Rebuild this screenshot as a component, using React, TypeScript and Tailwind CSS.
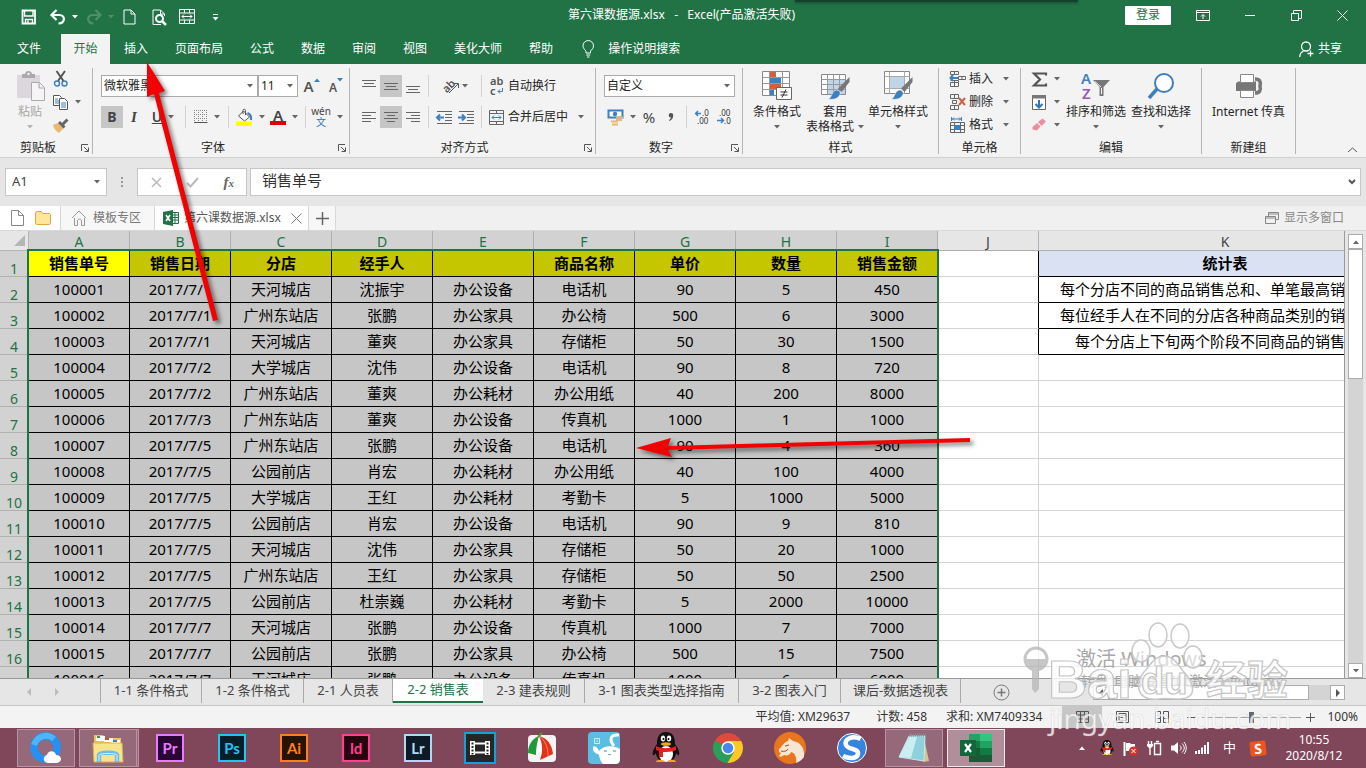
import type { ReactNode } from 'react';
import { clsx } from 'clsx';

const MENU_TABS = ['插入', '页面布局', '公式', '数据', '审阅', '视图', '美化大师', '帮助'];

const COLUMNS = ['A', 'B', 'C', 'D', 'E', 'F', 'G', 'H', 'I'];

const HEADINGS = ['销售单号', '销售日期', '分店', '经手人', '', '商品名称', '单价', '数量', '销售金额'];

const SALES = [
  ['100001', '2017/7/1', '天河城店', '沈振宇', '办公设备', '电话机', '90', '5', '450'],
  ['100002', '2017/7/1', '广州东站店', '张鹏', '办公家具', '办公椅', '500', '6', '3000'],
  ['100003', '2017/7/1', '天河城店', '董爽', '办公家具', '存储柜', '50', '30', '1500'],
  ['100004', '2017/7/2', '大学城店', '沈伟', '办公设备', '电话机', '90', '8', '720'],
  ['100005', '2017/7/2', '广州东站店', '董爽', '办公耗材', '办公用纸', '40', '200', '8000'],
  ['100006', '2017/7/3', '广州东站店', '董爽', '办公设备', '传真机', '1000', '1', '1000'],
  ['100007', '2017/7/5', '广州东站店', '张鹏', '办公设备', '电话机', '90', '4', '360'],
  ['100008', '2017/7/5', '公园前店', '肖宏', '办公耗材', '办公用纸', '40', '100', '4000'],
  ['100009', '2017/7/5', '大学城店', '王红', '办公耗材', '考勤卡', '5', '1000', '5000'],
  ['100010', '2017/7/5', '公园前店', '肖宏', '办公设备', '电话机', '90', '9', '810'],
  ['100011', '2017/7/5', '天河城店', '沈伟', '办公家具', '存储柜', '50', '20', '1000'],
  ['100012', '2017/7/5', '广州东站店', '王红', '办公家具', '存储柜', '50', '50', '2500'],
  ['100013', '2017/7/5', '公园前店', '杜崇巍', '办公耗材', '考勤卡', '5', '2000', '10000'],
  ['100014', '2017/7/7', '天河城店', '张鹏', '办公设备', '传真机', '1000', '7', '7000'],
  ['100015', '2017/7/7', '公园前店', '张鹏', '办公家具', '办公椅', '500', '15', '7500'],
  ['100016', '2017/7/7', '天河城店', '张鹏', '办公设备', '传真机', '1000', '6', '6000'],
];

const NOTES = [
  '每个分店不同的商品销售总和、单笔最高销',
  '每位经手人在不同的分店各种商品类别的销',
  '每个分店上下旬两个阶段不同商品的销售',
];

const SHEETS = [
  { name: '1-1 条件格式', width: 'w-[102px]' },
  { name: '1-2 条件格式', width: 'w-[102px]' },
  { name: '2-1 人员表', width: 'w-[89px]' },
  { name: '2-2 销售表', width: 'w-[90px]', active: true },
  { name: '2-3 建表规则', width: 'w-[102px]' },
  { name: '3-1 图表类型选择指南', width: 'w-[154px]' },
  { name: '3-2 图表入门', width: 'w-[102px]' },
  { name: '课后-数据透视表', width: 'w-[120px]' },
];

type Kids = { children?: ReactNode };

function Icon({ w, h, children }: Kids & { w: number; h: number }) {
  return (
    <svg width={w} height={h} viewBox={`0 0 ${w} ${h}`} fill="none" stroke="#555" className="shrink-0 overflow-visible" aria-hidden="true">
      {children}
    </svg>
  );
}

function Caret({ color = '#666' }: { color?: string }) {
  return (
    <svg width="6" height="4" viewBox="0 0 6 4" className="shrink-0" aria-hidden="true">
      <path d="M0 0h6L3 3.500z" fill={color} />
    </svg>
  );
}

/* ---------- title bar ---------- */

function TitleBar() {
  return (
    <header className="relative flex h-[34px] shrink-0 items-center text-white">
      <div className="absolute left-[795px] top-0 h-[2px] w-[283px] bg-[#12432a] shadow-[0_1px_3px_#12432a]" />
      <div className="flex flex-1 items-center pl-[21px]">
        <button aria-label="保存" className="w-[29px]">
          <Icon w={16} h={16}>
            <path d="M1.500 1.500h12.500v13H1.500z" stroke="#fff" strokeWidth="1.800" />
            <path d="M3.500 2v5h8.500V2M4.500 14.500v-4h7v4M7 11.500v3" stroke="#fff" strokeWidth="1.400" />
          </Icon>
        </button>
        <button aria-label="撤消" className="flex w-[36px] items-center gap-[6px]">
          <Icon w={16} h={15}>
            <path d="M2 5h7.500c6 0 6 8-1 8.500" stroke="#fff" strokeWidth="2.200" />
            <path d="M6.500 0 1.500 5l5 5" stroke="#fff" strokeWidth="2.200" />
          </Icon>
          <Caret color="#fff" />
        </button>
        <button aria-label="恢复" className="flex w-[37px] items-center gap-[6px]">
          <Icon w={16} h={15}>
            <path d="M14 5H6.500c-6 0-6 8 1 8.500M9.500 0l5 5-5 5" stroke="#4d9169" strokeWidth="2.200" />
          </Icon>
          <Caret color="#4d9169" />
        </button>
        <button aria-label="新建" className="w-[29px]">
          <Icon w={13} h={16}>
            <path d="M1 1h7l4 4v10H1zM8 1v4h4" stroke="#fff" />
          </Icon>
        </button>
        <button aria-label="打印预览" className="w-[27px]">
          <Icon w={16} h={17}>
            <path d="M12.500 7V5l-4-4H1v14.500h8M8.500 1v4h4" stroke="#fff" />
            <circle cx="7.500" cy="9.500" r="3.500" stroke="#fff" strokeWidth="2" />
            <path d="m10 12 4 4" stroke="#fff" strokeWidth="2.500" />
          </Icon>
        </button>
        <button aria-label="合并后居中" className="w-[33px]">
          <Icon w={16} h={16}>
            <path d="M.5.5h15v14H.5zM.5 4h15M.5 11h15M5.500.5V4M10.500.5V4M5.500 11v3.500M10.500 11v3.500M3 7.500h10M5 5.500l-2 2 2 2M11 5.500l2 2-2 2" stroke="#fff" />
          </Icon>
        </button>
        <button aria-label="自定义快速访问工具栏">
          <Icon w={7} h={7}>
            <path d="M1 .5h5" stroke="#fff" />
            <path d="M.5 3h6l-3 3.500z" fill="#fff" stroke="none" />
          </Icon>
        </button>
      </div>
      <h1 className="mr-[6px] whitespace-pre pb-1 text-[12px] leading-5">第六课数据源.xlsx   -   Excel(产品激活失败)</h1>
      <div className="flex flex-1 items-center justify-end pb-1 pr-[18px]">
        <button className="mr-[25px] h-[19px] w-[46px] rounded-[1px] bg-white text-[12px] leading-[18px] text-[#217346]">登录</button>
        <button aria-label="功能区显示选项" className="mr-[35px]">
          <Icon w={14} h={11}>
            <path d="M.5.500h13v10H.5zM.5 2.500h13M7 9V5M5 6.500l2-2 2 2" stroke="#fff" />
          </Icon>
        </button>
        <button aria-label="最小化" className="mr-9">
          <Icon w={10} h={11}>
            <path d="M0 5.500h10" stroke="#fff" />
          </Icon>
        </button>
        <button aria-label="向下还原" className="mr-[35px]">
          <Icon w={11} h={11}>
            <path d="M.5 3.500h7v7h-7zM2.500 3V.5h8v8H8" stroke="#fff" />
          </Icon>
        </button>
        <button aria-label="关闭">
          <Icon w={11} h={11}>
            <path d="m.5.5 10 10M10.500.5l-10 10" stroke="#fff" />
          </Icon>
        </button>
      </div>
    </header>
  );
}

function MenuTabs() {
  return (
    <nav className="flex h-[30px] shrink-0 items-stretch gap-px text-[12px] leading-[28px] text-white">
      <button className="mr-[2px] w-[58px]">文件</button>
      <button className="w-[49px] bg-[#f3f3f3] text-[#217346]">开始</button>
      {MENU_TABS.map((tab) => (
        <button key={tab} className="px-[13px]">{tab}</button>
      ))}
      <button className="ml-[15px] flex items-center gap-[13px]">
        <Icon w={13} h={18}>
          <path d="M4 13v-2C2.500 9.500 1 8 1 5.800a5.200 5.200 0 0 1 10.500 0c0 2.200-1.500 3.700-3 5.200v2zM4.200 15h4M5 17h2.500" stroke="#fff" />
        </Icon>
        操作说明搜索
      </button>
      <button className="ml-auto mr-6 flex items-center gap-1">
        <Icon w={15} h={17}>
          <circle cx="7" cy="5.500" r="4.500" stroke="#fff" strokeWidth="1.300" />
          <path d="M.7 16c0-3 1.500-5 4-6M8.500 12.500h6M11.500 9.500v6" stroke="#fff" strokeWidth="1.300" />
        </Icon>
        共享
      </button>
    </nav>
  );
}

/* ---------- ribbon ---------- */

function Group({ label, width, launcher, children }: Kids & { label: string; width: string; launcher?: boolean }) {
  return (
    <section aria-label={label} className={clsx('flex h-[86px] shrink-0 flex-col border-r border-[#b5b5b5]', width)}>
      <div className="flex h-[74px]">{children}</div>
      <div className="flex h-3 items-center leading-3">
        <span className="flex-1 text-center">{label}</span>
        {launcher && (
          <button aria-label={`${label}设置`} className="flex w-4 justify-end pr-[3px]">
            <Icon w={8} h={8}>
              <path d="M.5 7V.5H7M3 3l4 4M7.500 3.500v4h-4" />
            </Icon>
          </button>
        )}
      </div>
    </section>
  );
}

function Tool({ label, width = 'w-[22px]', active, caret, children }: Kids & { label: string; width?: string; active?: boolean; caret?: boolean }) {
  return (
    <button aria-label={label} className={clsx('flex h-[22px] shrink-0 items-center justify-center gap-[6px]', width, active && 'bg-[#c6c6c6]')}>
      {children}
      {caret && <Caret />}
    </button>
  );
}

function Sep() {
  return <span className="mx-1 h-[22px] w-px shrink-0 bg-[#d2d2d2]" />;
}

function Combo({ label, value, width }: { label: string; value: string; width: string }) {
  return (
    <label className={clsx('relative flex h-[22px] items-center border border-[#ababab] bg-white', width)}>
      <select aria-label={label} className="h-full w-full appearance-none pl-[2px] text-[12px] leading-5 outline-none">
        <option>{value}</option>
      </select>
      <span className="pointer-events-none absolute right-[4px] flex">
        <Caret />
      </span>
    </label>
  );
}

function BigButton({ width, icon, lines, caret = true, muted }: { width: string; icon: ReactNode; lines: string[]; caret?: boolean; muted?: boolean }) {
  return (
    <button className={clsx('flex shrink-0 flex-col items-center whitespace-nowrap pt-[3px] leading-[15px]', width, muted && 'text-[#a6a6a6]')}>
      <span className="mb-1 flex h-[29px] items-center">{icon}</span>
      {lines.map((line, i) => (
        <span key={line} className="flex items-center gap-1">
          {line}
          {i === 1 && <Caret />}
        </span>
      ))}
      {caret && lines.length === 1 && (
        <span className="flex h-[15px] items-center"><Caret color={muted ? '#b5b5b5' : '#666'} /></span>
      )}
    </button>
  );
}

function RowButton({ label, icon }: { label: string; icon: ReactNode }) {
  return (
    <button className="flex h-[22px] items-center">
      {icon}
      <span className="ml-[3px] mr-[10px]">{label}</span>
      <Caret />
    </button>
  );
}

// three or four short lines used by the alignment buttons
function Lines({ d }: { d: string }) {
  return (
    <Icon w={14} h={13}>
      <path d={d} stroke="#666" />
    </Icon>
  );
}

const Brush = () => (
  <>
    <path d="M29.500 6 18 17.500l3.500 3.500 8-10z" fill="#777" stroke="none" />
    <path d="M8 28c4-1 3-6 7-8.500 3-1.500 6 1.500 5 4-2 4.500-7 5.500-12 4.500z" fill="#3f7fbf" stroke="#f3f3f3" strokeWidth=".6" />
  </>
);

function Ribbon() {
  return (
    <div className="flex h-[94px] shrink-0 items-start border-b border-[#d0d0d0] bg-[#f3f3f3] pt-1 text-[12px] text-[#262626]">
      <Group label="剪贴板" width="w-[93px]" launcher>
        <div className="flex w-full pl-[14px]">
          <BigButton
            muted
            width="w-8"
            lines={['粘贴']}
            icon={
              <Icon w={29} h={30}>
                <path d="M1 4h23v23H1z" fill="#dbd7dc" stroke="none" />
                <path d="M6 3h3c0-4 7-4 7 0h3v4H6z" fill="#aaa" stroke="none" />
                <circle cx="12.500" cy="3" r="1.200" fill="#f3f3f3" stroke="none" />
                <path d="M15.500 11.500h8l5 5v13h-13zM23 12v5h5" fill="#f7f4f8" stroke="#aaa" />
              </Icon>
            }
          />
          <div className="flex flex-col gap-px pl-[7px]">
            <button aria-label="剪切" className="flex h-[22px] items-center">
              <Icon w={16} h={16}>
                <path d="m3.500 0 7 10M12 0 5 10" strokeWidth="2" />
                <circle cx="4" cy="12.500" r="2.500" stroke="#3f7fbf" strokeWidth="1.400" />
                <circle cx="11.500" cy="12.500" r="2.500" stroke="#3f7fbf" strokeWidth="1.400" />
              </Icon>
            </button>
            <button aria-label="复制" className="flex h-[22px] items-center gap-[6px]">
              <Icon w={16} h={15}>
                <path d="M.5.5h6l2 2v8h-8z" fill="#fff" />
                <path d="M2 4h3M2 6h4M2 8h4" stroke="#3f7fbf" />
                <path d="M6.500 3.500h5l3 3v8h-8z" fill="#fff" />
                <path d="M8 8h5M8 10h5M8 12h5" stroke="#3f7fbf" />
              </Icon>
              <Caret />
            </button>
            <button aria-label="格式刷" className="flex h-[22px] items-center">
              <Icon w={16} h={15}>
                <path d="m0 7 5-2 5.500 5.500L6 15C3 13 1 11 0 7z" fill="#e9b872" stroke="none" />
                <path d="m6 4 5.500 5.500M9.500 6.500 14.500 1.500" stroke="#666" strokeWidth="3" />
              </Icon>
            </button>
          </div>
        </div>
      </Group>

      <Group label="字体" width="w-[257px]" launcher>
        <div className="flex w-full flex-col gap-[9px] pl-2 pt-[7px]">
          <div className="flex items-center">
            <Combo label="字体" value="微软雅黑" width="w-[157px]" />
            <Combo label="字号" value="11" width="w-[40px]" />
            <Tool label="增大字号" width="w-[27px]">
              <span className="text-[15px] font-semibold text-[#555]">A</span>
              <span className="-ml-[6px] mb-3 rotate-180"><Caret color="#3f7fbf" /></span>
            </Tool>
            <Tool label="减小字号" width="w-[22px]">
              <span className="pt-1 text-[12px] font-semibold text-[#555]">A</span>
              <span className="-ml-[6px] mb-3"><Caret color="#3f7fbf" /></span>
            </Tool>
          </div>
          <div className="flex items-center text-[#444]">
            <Tool label="加粗" active><b className="text-[14px] leading-5">B</b></Tool>
            <Tool label="倾斜"><i className="font-['Liberation_Serif',serif] text-[15px] font-bold">I</i></Tool>
            <Tool label="下划线" width="w-[36px]" caret><u className="text-[14px] font-semibold leading-5">U</u></Tool>
            <Sep />
            <Tool label="边框" width="w-[34px]" caret>
              <Icon w={14} h={14}>
                <path d="M.5 0v13M4.500 0v13M8.500 0v13M12.500 0v13M0 .5h13M0 4.500h13M0 8.500h13" stroke="#888" strokeDasharray="1 1" />
                <path d="M0 12.500h13.500" />
              </Icon>
            </Tool>
            <Sep />
            <Tool label="填充颜色" width="w-[34px]" caret>
              <Icon w={17} h={17}>
                <path d="m2.500 7 5-5 6 6-5 4z" fill="#fff" />
                <path d="M7 5V1.500C7-.2 9.500-.2 9.500 1.500V6" />
                <path d="M11.500 4c3 1 4 3 3.500 7" stroke="#3f7fbf" strokeWidth="2.200" />
                <path d="M0 12.500h16V17H0z" fill="#ff0" stroke="none" />
              </Icon>
            </Tool>
            <Tool label="字体颜色" width="w-[34px]" caret>
              <span className="flex flex-col items-center">
                <span className="text-[15px] font-semibold leading-3">A</span>
                <span className="h-1 w-4 bg-[#e00000]" />
              </span>
            </Tool>
            <Sep />
            <Tool label="拼音" width="w-[34px]" caret>
              <span className="flex flex-col items-center text-[10px] leading-[9px]">
                <span>wén</span>
                <span className="leading-3 text-[#2f75b5]">文</span>
              </span>
            </Tool>
          </div>
        </div>
      </Group>

      <Group label="对齐方式" width="w-[246px]" launcher>
        <div className="flex w-full flex-col gap-[9px] pl-2 pt-[7px]">
          <div className="flex items-center">
            <Tool label="顶端对齐"><Lines d="M0 .5h14M2 3.500h10M0 6.500h14" /></Tool>
            <Tool label="垂直居中" active><Lines d="M0 3.500h14M2 6.500h10M0 9.500h14" /></Tool>
            <Tool label="底端对齐"><Lines d="M0 6.500h14M2 9.500h10M0 12.500h14" /></Tool>
            <Sep />
            <Tool label="方向" width="w-[44px]" caret>
              <span className="relative">
                <span className="block -rotate-45 text-[11px] font-semibold leading-4 text-[#555]">ab</span>
                <span className="absolute -right-1 top-1">
                  <Icon w={12} h={12}><path d="m1 11 9-9M6 1.500h4.500V6" /></Icon>
                </span>
              </span>
            </Tool>
            <Sep />
            <button className="flex items-center pl-[4px]">
              <span className="flex w-[18px] flex-col items-start text-[11px] font-semibold leading-[10px] text-[#555]">
                <span>ab</span>
                <span className="flex items-center gap-px">
                  c
                  <Icon w={6} h={6}><path d="M5.500 0v3.500H1M3 1.500l-2 2 2 2" stroke="#3f7fbf" /></Icon>
                </span>
              </span>
              自动换行
            </button>
          </div>
          <div className="flex items-center">
            <Tool label="左对齐"><Lines d="M0 1.500h14M0 4.500h9M0 7.500h14M0 10.500h9" /></Tool>
            <Tool label="居中" active><Lines d="M0 1.500h14M3 4.500h8M0 7.500h14M3 10.500h8" /></Tool>
            <Tool label="右对齐"><Lines d="M0 1.500h14M5 4.500h9M0 7.500h14M5 10.500h9" /></Tool>
            <Sep />
            <Tool label="减少缩进量">
              <Icon w={17} h={13}>
                <path d="M1 .5h15M9 3.500h7M9 6.500h7M9 9.500h7M1 12.500h15" stroke="#666" />
                <path d="M1 6.500h7M4 3.500l-3 3 3 3" stroke="#3f7fbf" strokeWidth="2" />
              </Icon>
            </Tool>
            <Tool label="增加缩进量">
              <Icon w={17} h={13}>
                <path d="M1 .5h15M9 3.500h7M9 6.500h7M9 9.500h7M1 12.500h15" stroke="#666" />
                <path d="M0 6.500h7M4 3.500l3 3-3 3" stroke="#3f7fbf" strokeWidth="2" />
              </Icon>
            </Tool>
            <Sep />
            <button className="flex items-center pl-[3px]">
              <Icon w={15} h={15}>
                <path d="M.5.5h14v14H.5zM.5 3.500h14M.5 11.500h14M7.500.5v3M7.500 11.500v3" stroke="#666" />
                <path d="M3 7.500h9M5 5.500l-2 2 2 2M10 5.500l2 2-2 2" stroke="#3f7fbf" />
              </Icon>
              <span className="ml-1 mr-[10px]">合并后居中</span>
              <Caret />
            </button>
          </div>
        </div>
      </Group>

      <Group label="数字" width="w-[147px]" launcher>
        <div className="flex w-full flex-col gap-[9px] pl-2 pt-[7px]">
          <Combo label="数字格式" value="自定义" width="w-[131px]" />
          <div className="flex items-center">
            <Tool label="会计数字格式" width="w-[34px]" caret>
              <Icon w={17} h={17}>
                <path d="M1.500 1.500h14v7h-14z" fill="#fff" stroke="#3f7fbf" strokeWidth="2" />
                <circle cx="8" cy="5" r="2.200" fill="#3f7fbf" stroke="none" />
                <path d="M9 8.500h7M9 11h6M4 12.500h7M5 15.500h6" stroke="#e9b872" strokeWidth="2" />
              </Icon>
            </Tool>
            <Tool label="百分比样式"><span className="text-[15px] leading-5 text-[#444]">%</span></Tool>
            <Tool label="千位分隔样式">
              <Icon w={6} h={8}>
                <path d="M3 0a2.300 2.300 0 0 1 2.200 2.500C5.200 5 4 7 1.500 8L1 7c1.300-.7 1.800-1.500 1.900-2.500A2.200 2.200 0 0 1 3 0z" fill="#555" stroke="none" />
              </Icon>
            </Tool>
            <Sep />
            <Tool label="增加小数位数">
              <Icon w={15} h={14}>
                <path d="M0 3.500h6M3 1 .7 3.500 3 6" stroke="#3f7fbf" strokeWidth="1.500" />
                <text x="7" y="6" fontSize="8" fill="#333" stroke="none">.0</text>
                <text x="2" y="14" fontSize="8" fill="#333" stroke="none">.00</text>
              </Icon>
            </Tool>
            <Tool label="减少小数位数">
              <Icon w={15} h={14}>
                <path d="M0 10.500h6M4 8l2.500 2.500L4 13" stroke="#3f7fbf" strokeWidth="1.500" />
                <text x="2" y="6" fontSize="8" fill="#333" stroke="none">.00</text>
                <text x="7" y="14" fontSize="8" fill="#333" stroke="none">.0</text>
              </Icon>
            </Tool>
          </div>
        </div>
      </Group>

      <Group label="样式" width="w-[196px]">
        <div className="flex pl-[5px]">
          <BigButton
            width="w-[58px]"
            lines={['条件格式']}
            icon={
              <Icon w={30} h={30}>
                <path d="M.5.5h27v24H.5z" fill="#fff" stroke="#888" />
                <path d="M8 1h6v5H8zM8 13h11v5H8z" fill="#d0603f" stroke="none" />
                <path d="M8 7h11v5H8zM8 19h4v5H8z" fill="#3f7fbf" stroke="none" />
                <path d="M.5 6.500h27M.5 12.500h27M.5 18.500h27M7.500.5v24M20.500.5v24" stroke="#999" />
                <path d="M14.500 16.500h15v12h-15z" fill="#fff" stroke="#666" />
                <path d="M18.500 21h7M18.500 24h7M24 18.500l-4 8" stroke="#333" />
              </Icon>
            }
          />
          <BigButton
            width="w-[58px]"
            lines={['套用', '表格格式']}
            icon={
              <Icon w={30} h={30}>
                <path d="M1.500 3.500h24v20h-24z" fill="#fff" stroke="#888" />
                <path d="M7 8h18v15H7z" fill="#c0d4ea" stroke="none" />
                <path d="M1.500 8.500h24M1.500 13.500h24M1.500 18.500h24M7.500 3.500v20M13.500 3.500v20M19.500 3.500v20" stroke="#999" />
                <Brush />
              </Icon>
            }
          />
          <BigButton
            width="w-[68px]"
            lines={['单元格样式']}
            icon={
              <Icon w={30} h={30}>
                <path d="M1.500.5h25v22h-25z" fill="#fff" stroke="#888" />
                <path d="M6.500 5.500h15v12h-15z" fill="#c0d4ea" stroke="#999" />
                <path d="M1.500 5.500h25M1.500 17.500h25M6.500.5v22M21.500.5v22" stroke="#aaa" />
                <Brush />
              </Icon>
            }
          />
        </div>
      </Group>

      <Group label="单元格" width="w-[82px]">
        <div className="flex flex-col gap-px pl-[11px]">
          <RowButton
            label="插入"
            icon={
              <Icon w={16} h={16}>
                <path d="M.5.5h8v3h-8zM4.500.5v3M.5 11.500h8v4h-8zM4.500 9v6M.5 9.500h8v2M8.500 5.500h7v3h-7zM12 5.500v3" stroke="#666" />
                <path d="M0 7h8M3 4 .5 7 3 10" stroke="#3f7fbf" strokeWidth="2" />
              </Icon>
            }
          />
          <RowButton
            label="删除"
            icon={
              <Icon w={16} h={16}>
                <path d="M.5.500h8v4h-8zM4.500.5v4M2.500 6.500h4v3h-4zM.5 11.500h8v4h-8zM4.500 11.500v4" stroke="#666" />
                <path d="m9 4 6 7M15 4l-6 7" stroke="#d0603f" strokeWidth="2" />
              </Icon>
            }
          />
          <RowButton
            label="格式"
            icon={
              <Icon w={16} h={16}>
                <path d="M1.500 0v4M11.500 0v4M2 2h9M4 .5 2.500 2 4 3.500M9 .5 10.500 2 9 3.500" stroke="#3f7fbf" />
                <path d="M.5 5.500h14v10H.5zM.5 8.500h14M.5 12.500h14M4.500 5.500v10M10.500 5.500v10" stroke="#666" />
                <path d="M4 8h6v5H4z" fill="#3f7fbf" stroke="none" />
              </Icon>
            }
          />
        </div>
      </Group>

      <Group label="编辑" width="w-[181px]">
        <div className="flex flex-col gap-px pl-[11px] pr-[3px]">
          <button aria-label="自动求和" className="flex h-[22px] w-[28px] items-center justify-between">
            <Icon w={16} h={15}>
              <path d="M14 3.500V1.500H2l6 6-6 6h12v-2" strokeWidth="2.200" />
            </Icon>
            <Caret />
          </button>
          <button aria-label="填充" className="flex h-[22px] w-[28px] items-center justify-between">
            <Icon w={15} h={15}>
              <path d="M.5.5h13v14H.5z" fill="#fff" stroke="#666" />
              <path d="M0 0h14v3.500H0z" fill="#777" stroke="none" />
              <path d="M7 5v7M3.500 9 7 12.500 10.500 9" stroke="#2f75b5" strokeWidth="2" />
            </Icon>
            <Caret />
          </button>
          <button aria-label="清除" className="flex h-[22px] w-[28px] items-center justify-between">
            <Icon w={14} h={14}>
              <path d="m6 4 4.500-3.500 3.500 3L9.500 8z" fill="#e98fa0" stroke="none" />
              <path d="m5 5 3.500 3.500L5 12.500.5 11.500V9z" fill="#e98fa0" stroke="none" />
            </Icon>
            <Caret />
          </button>
        </div>
        <BigButton
          width="w-[66px]"
          lines={['排序和筛选']}
          icon={
            <Icon w={30} h={30}>
              <text x="0" y="13" fontSize="15" fontWeight="600" fill="#3f7fbf" stroke="none">A</text>
              <text x="1" y="28" fontSize="15" fontWeight="600" fill="#9b57b5" stroke="none">Z</text>
              <path d="M12 9h17l-6.500 7v9h-4v-9z" fill="#777" stroke="none" />
              <path d="M20.500 17v6M14 10.500l6 5.500" stroke="#f3f3f3" />
            </Icon>
          }
        />
        <BigButton
          width="w-[64px]"
          lines={['查找和选择']}
          icon={
            <Icon w={28} h={28}>
              <circle cx="17" cy="11" r="9" fill="#fff" stroke="#3f7fbf" strokeWidth="2" />
              <path d="m10 17-8 9" stroke="#3f7fbf" strokeWidth="3.500" />
            </Icon>
          }
        />
      </Group>

      <Group label="新建组" width="w-[94px]">
        <BigButton
          width="w-full"
          lines={['Internet 传真']}
          caret={false}
          icon={
            <Icon w={28} h={26}>
              <path d="M1 11c0-2 2-2.500 4-2.500h16V18H1z" fill="#777" stroke="none" />
              <path d="M20 6c5 0 6 3 5 7 1 4 0 7-5 7" stroke="#777" strokeWidth="3.500" />
              <path d="M5.500 1.500h13v8h-13zM5.500 17.500h13v7h-13z" fill="#fff" stroke="#888" />
            </Icon>
          }
        />
      </Group>

      <button aria-label="折叠功能区" className="ml-auto mr-2 mt-[79px]">
        <Icon w={11} h={6}><path d="m1 5 4.500-4L10 5" /></Icon>
      </button>
    </div>
  );
}

/* ---------- formula bar and workbook tabs ---------- */

function FormulaBar() {
  return (
    <div className="flex h-12 shrink-0 items-center bg-[#e6e6e6] px-[5px] text-[#444]">
      <label className="relative flex h-7 w-[102px] items-center border border-[#c6c6c6] bg-white">
        <input aria-label="名称框" defaultValue="A1" className="w-full bg-transparent pl-[6px] text-[13px] outline-none" />
        <span className="absolute right-[6px]"><Caret /></span>
      </label>
      <span className="mx-[14px]">
        <Icon w={2} h={11}><path d="M1 0v2M1 4v2M1 8v2" stroke="#999" strokeWidth="2" /></Icon>
      </span>
      <div className="mr-[3px] flex h-7 w-[110px] items-center justify-between border border-[#c6c6c6] bg-white pl-[13px] pr-[12px]">
        <button aria-label="取消"><Icon w={11} h={11}><path d="m1 1 9 9M10 1l-9 9" stroke="#bbb" strokeWidth="1.500" /></Icon></button>
        <button aria-label="输入"><Icon w={13} h={11}><path d="m1 6 3.500 3.500L12 1" stroke="#bbb" strokeWidth="2" /></Icon></button>
        <button aria-label="插入函数" className="font-['Liberation_Serif',serif] text-[15px] font-bold italic leading-5 text-[#666]">
          f<span className="text-[11px]">x</span>
        </button>
      </div>
      <label className="relative flex h-7 flex-1 items-center border border-[#c6c6c6] bg-white">
        <input aria-label="编辑栏" defaultValue="销售单号" className="w-full bg-transparent pb-[3px] pl-[11px] text-[15px] text-[#333] outline-none" />
        <span className="absolute right-1">
          <Icon w={8} h={6}><path d="m1 1 3 3 3-3" strokeWidth="2" /></Icon>
        </span>
      </label>
    </div>
  );
}

function WorkbookTabs() {
  return (
    <div className="flex h-[25px] shrink-0 items-stretch border-b border-[#d8d8d8] bg-[#f0f0f0] text-[12px] text-[#777]">
      <div className="flex w-[61px] items-center gap-[11px] border-r border-[#d8d8d8] bg-white pl-[11px]">
        <button aria-label="新建文档">
          <Icon w={13} h={16}><path d="M.5.5h7l5 5v10H.5zM7.500.5v5h5" stroke="#888" /></Icon>
        </button>
        <button aria-label="打开文件夹">
          <Icon w={16} h={14}><path d="M.5 12V2l1-1.500h5L8 2.500h6.500l1 1V12l-1 1.500h-13z" fill="#ffe79a" stroke="#d9a93f" /></Icon>
        </button>
      </div>
      <button className="flex w-[94px] items-center gap-[7px] border-r border-[#d8d8d8] bg-[#f7f7f7] pl-[11px]">
        <Icon w={14} h={16}><path d="M2.500 8v7.500h3V11c0-2.500 4-2.500 4 0v4.500h3V8M0 8l7-7 7 7" stroke="#999" /></Icon>
        模板专区
      </button>
      <div className="flex w-[154px] items-center border-r border-[#d8d8d8] bg-white pl-2 text-[#555]">
        <Icon w={16} h={16}>
          <path d="M9 2.500h6.500v11H9M9 5h6M9 7.500h6M9 10h6M12 3v10" fill="#fff" stroke="#217346" />
          <path d="m0 2 10-2v16L0 14z" fill="#217346" stroke="none" />
          <path d="m3 5 4 6M7 5l-4 6" stroke="#fff" strokeWidth="1.500" />
        </Icon>
        <span className="ml-[5px] flex-1">第六课数据源.xlsx</span>
        <button aria-label="关闭工作簿" className="mr-[6px]">
          <Icon w={11} h={11}><path d="m.5.5 10 10M10.500.5l-10 10" stroke="#777" /></Icon>
        </button>
      </div>
      <button aria-label="新建工作簿" className="flex w-[27px] items-center justify-center border-r border-[#d8d8d8] bg-[#f7f7f7]">
        <Icon w={13} h={13}><path d="M0 6.500h13M6.500 0v13" stroke="#666" strokeWidth="1.500" /></Icon>
      </button>
      <button className="ml-auto mr-[22px] flex items-center gap-[5px] text-[#888]">
        <Icon w={14} h={12}><path d="M.5 4.500h10v7H.5zM.5 6h10M3.500 4V.5h10v7H11M3.500 2h10" stroke="#888" /></Icon>
        显示多窗口
      </button>
    </div>
  );
}

/* ---------- grid ---------- */

function SheetGrid() {
  return (
    <div className="flex min-h-0 flex-1 bg-[#e6e6e6]">
      <div className="relative min-w-0 flex-1 overflow-hidden border-r border-[#999] bg-white">
        <table className="w-[1411px] table-fixed border-separate border-spacing-0 text-center text-[15px] leading-5 text-black">
          <colgroup>
            <col className="w-[29px]" />
            {COLUMNS.map((c) => <col key={c} className="w-[101px]" />)}
            <col className="w-[101px]" />
            <col className="w-[372px]" />
          </colgroup>
          <thead>
            <tr className="h-5 bg-[#e6e6e6] text-[14px] leading-[16px] text-[#444]">
              <th aria-label="全选" className="border-b border-r border-[#b5b5b5] p-0">
                <span className="flex justify-end pr-[3px]">
                  <Icon w={11} h={11}><path d="M11 0v11H0z" fill="#b5b5b5" stroke="none" /></Icon>
                </span>
              </th>
              {COLUMNS.map((c) => (
                <th key={c} className="border-b border-r border-[#b0b0b0] bg-[#d2d2d2] p-0 pt-[3px] font-normal text-[#217346]">{c}</th>
              ))}
              <th className="border-b border-r border-[#b0b0b0] p-0 pt-[3px] font-normal">J</th>
              <th className="border-b border-[#b0b0b0] p-0 pt-[3px] font-normal">K</th>
            </tr>
          </thead>
          <tbody>
            {[HEADINGS, ...SALES].map((row, r) => (
              <tr key={r} className="h-[26px]">
                <th className="border-b border-r border-[#b0b0b0] bg-[#d2d2d2] p-0 align-bottom text-[14px] font-normal leading-[14px] text-[#217346]">
                  {r + 1}
                </th>
                {row.map((value, c) => (
                  <td
                    key={c}
                    className={clsx(
                      'overflow-hidden whitespace-nowrap border-b border-r border-black p-0 pb-[2px]',
                      r === 0 && 'font-bold',
                      r === 0 && c === 0 && 'bg-[#ffff00]',
                      r === 0 && c > 0 && 'bg-[#c6c600]',
                      r > 0 && 'bg-[#c6c6c6]',
                    )}
                  >
                    {value}
                  </td>
                ))}
                <td className={clsx('border-b border-r border-b-[#d4d4d4]', r < 4 ? 'border-r-black' : 'border-r-[#d4d4d4]')} />
                {r === 0 && <td className="border-b border-black bg-[#d9e1f2] p-0 pb-[2px] font-bold">统计表</td>}
                {r > 0 && r < 4 && (
                  <td className={clsx('whitespace-nowrap border-b border-black p-0 pb-[2px] text-left', r === 3 ? 'pl-9' : 'pl-[21px]')}>
                    {NOTES[r - 1]}
                  </td>
                )}
                {r > 3 && <td className="border-b border-[#d4d4d4]" />}
              </tr>
            ))}
          </tbody>
        </table>
        {/* selection frame around A:I */}
        <div className="pointer-events-none absolute bottom-[-4px] left-[27px] top-[18px] w-[912px] border-2 border-[#217346]" />
      </div>
      <div className="flex w-[21px] flex-col items-start pl-[3px] pt-[3px]">
        <button aria-label="向上滚动" className="flex h-[15px] w-[15px] items-center justify-center border border-[#ababab] bg-white">
          <span className="rotate-180"><Caret /></span>
        </button>
        <div className="w-[15px] flex-1 bg-[#d4d4d4]">
          <div className="h-[130px] border border-[#ababab] bg-white" />
        </div>
        <button aria-label="向下滚动" className="flex h-[15px] w-[15px] items-center justify-center border border-[#ababab] bg-white">
          <Caret />
        </button>
      </div>
    </div>
  );
}

function SheetTabs() {
  return (
    <div className="flex h-7 shrink-0 items-start border-b border-t border-b-[#c6c6c6] border-t-[#999] bg-[#e6e6e6] text-[13px] text-[#444]">
      <div className="flex w-[100px] items-center gap-[24px] self-stretch pl-[27px]">
        <button aria-label="上一张"><Icon w={4} h={8}><path d="M4 0v8L0 4z" fill="#bbb" stroke="none" /></Icon></button>
        <button aria-label="下一张"><Icon w={4} h={8}><path d="M0 0v8l4-4z" fill="#bbb" stroke="none" /></Icon></button>
      </div>
      <nav className="flex">
        {SHEETS.map((s) => (
          <button
            key={s.name}
            className={clsx(
              'h-6 shrink-0 whitespace-nowrap pb-[2px] leading-[20px]',
              s.width,
              s.active ? 'border-b-2 border-[#217346] bg-white text-[#217346]' : 'border-r border-[#aaa] first:border-l',
            )}
          >
            {s.name}
          </button>
        ))}
      </nav>
      <button aria-label="新工作表" className="ml-[32px] mt-[5px]">
        <Icon w={17} h={17}>
          <circle cx="8.500" cy="8.500" r="7.500" stroke="#777" />
          <path d="M4.500 8.500h8M8.500 4.500v8" stroke="#777" strokeWidth="1.500" />
        </Icon>
      </button>
      <div className="ml-auto mr-[21px] mt-[6px] flex h-[15px] w-[252px] bg-[#d4d4d4]">
        <button aria-label="向左滚动" className="flex w-4 items-center justify-center border border-[#ababab] bg-white">
          <Icon w={4} h={8}><path d="M4 0v8L0 4z" fill="#555" stroke="none" /></Icon>
        </button>
        <div className="w-[200px] border border-[#ababab] bg-white" />
        <button aria-label="向右滚动" className="ml-auto flex w-[15px] items-center justify-center border border-[#ababab] bg-white">
          <Icon w={4} h={8}><path d="M0 0v8l4-4z" fill="#555" stroke="none" /></Icon>
        </button>
      </div>
    </div>
  );
}

function StatusBar() {
  return (
    <footer className="flex h-[22px] shrink-0 items-center justify-end bg-[#f3f3f3] pr-2 text-[12px] text-[#333]">
      <span className="mr-[26px]">平均值: XM29637</span>
      <span className="mr-[19px]">计数: 458</span>
      <span className="mr-[20px]">求和: XM7409334</span>
      <button aria-label="普通视图" className="flex h-full w-10 items-center justify-center bg-[#c6c6c6]">
        <Icon w={13} h={12}><path d="M.5.500h12v11H.5zM.5 4h12M.5 8h12M4.500.5v11M8.500.5v11" /></Icon>
      </button>
      <button aria-label="页面布局" className="flex w-10 justify-center">
        <Icon w={13} h={12}><path d="M.5.500h12v11H.5zM3 2.500h7v7H3zM4.500 4.500h4M4.500 6.500h4" /></Icon>
      </button>
      <button aria-label="分页预览" className="flex w-10 justify-center">
        <Icon w={14} h={12}><path d="M.5 11.500V.5h5v7h-5M13.500 11.500V.5h-5v7h5M5.500 7.500v4M8.500 7.500v4M0 11.500h5.500M8.500 11.500H14" /></Icon>
      </button>
      <button aria-label="缩小" className="ml-[5px] mr-[6px]">
        <Icon w={9} h={9}><path d="M0 4.500h9" /></Icon>
      </button>
      <label className="relative flex w-[99px] items-center">
        <input type="range" aria-label="缩放" min={10} max={190} defaultValue={100} className="absolute inset-0 opacity-0" />
        <span className="h-px w-full bg-[#aaa]" />
        <span className="absolute left-[47px] h-[11px] w-[5px] bg-[#666]" />
      </label>
      <button aria-label="放大" className="ml-[5px] mr-[12px]">
        <Icon w={9} h={9}><path d="M0 4.500h9M4.500 0v9" /></Icon>
      </button>
      <span>100%</span>
    </footer>
  );
}

/* ---------- taskbar ---------- */

function AdobeTile({ text, tone }: { text: string; tone: string }) {
  return (
    <span className={clsx('flex h-7 w-7 items-center justify-center border-2 font-[Lato,sans-serif] text-[15px] font-bold leading-none', tone)}>
      {text}
    </span>
  );
}

function Penguin({ size }: { size: number }) {
  return (
    <svg width={size} height={size} viewBox="0 0 32 32" className="shrink-0" aria-hidden="true">
      <path d="M16 0c7 0 9 5 9 12 3 4 5 8 4 11-1 1-2-1-3-2 0 4-3 9-10 9S6 25 6 21c-1 1-2 3-3 2-1-3 1-7 4-11 0-7 2-12 9-12z" fill="#111" />
      <ellipse cx="16" cy="22" rx="7" ry="8" fill="#fff" />
      <ellipse cx="13" cy="6.500" rx="2.200" ry="3" fill="#fff" />
      <ellipse cx="19" cy="6.500" rx="2.200" ry="3" fill="#fff" />
      <circle cx="13.500" cy="7" r="1" />
      <circle cx="18.500" cy="7" r="1" />
      <ellipse cx="16" cy="12" rx="5" ry="1.800" fill="#f3a61c" />
      <path d="M6 14c6 3 14 3 20 0v4c-4 2-9 2-13 2v5H9v-6l-3-1z" fill="#e32020" />
      <path d="M6 30c0-3 8-3 9 0zM17 30c1-3 9-3 9 0z" fill="#f3a61c" />
    </svg>
  );
}

const TASKS: { name: string; state?: 'open' | 'stack' | 'active'; icon: ReactNode }[] = [
  {
    name: 'QQ浏览器',
    state: 'open',
    icon: (
      <Icon w={32} h={32}>
        <circle cx="15.500" cy="15.500" r="11.500" stroke="#2491f5" strokeWidth="7.500" />
        <path d="M4 13C7 4 17 1 24 7" stroke="#4db4ff" strokeWidth="6" />
        <path d="M18 31c-6-1-5-7-1-8 1-5 8-5 9 0 6 0 7 7 1 8z" fill="#fff" stroke="none" />
      </Icon>
    ),
  },
  {
    name: '文件资源管理器',
    state: 'stack',
    icon: (
      <Icon w={34} h={32}>
        <path d="M3 30V3h9l2 3h16v24z" fill="#e6c65c" stroke="none" />
        <path d="M5 4h9v5H5zM13 6h9v4h-9zM20 8h9v3h-9z" fill="#fff" stroke="none" />
        <path d="M6 4h3v2H6z" fill="#3a9d3a" stroke="none" />
        <path d="M14 6h4v2h-4z" fill="#d84b2b" stroke="none" />
        <path d="M22 8h4v2h-4z" fill="#3f7fbf" stroke="none" />
        <path d="M2 11h29l1 19H3z" fill="#f8e38d" stroke="#d9b54a" />
        <path d="M8 30v-7c0-3 18-3 18 0v7" stroke="#6bbdf0" strokeWidth="4.500" />
        <path d="M8 29v-6c0-2 18-2 18 0v6" stroke="#d5f0ff" />
      </Icon>
    ),
  },
  { name: 'Premiere', icon: <AdobeTile text="Pr" tone="border-[#e77bff] bg-[#2a0634] text-[#e77bff]" /> },
  { name: 'Photoshop', icon: <AdobeTile text="Ps" tone="border-[#20c5f5] bg-[#061e26] text-[#20c5f5]" /> },
  { name: 'Illustrator', icon: <AdobeTile text="Ai" tone="border-[#ff7f18] bg-[#261300] text-[#ff7f18]" /> },
  { name: 'InDesign', icon: <AdobeTile text="Id" tone="border-[#ff3f8f] bg-[#26030f] text-[#ff3f8f]" /> },
  { name: 'Lightroom', icon: <AdobeTile text="Lr" tone="border-[#b4d6f5] bg-[#0d1b26] text-[#b4d6f5]" /> },
  {
    name: '视频编辑',
    icon: (
      <Icon w={32} h={32}>
        <path d="M1 1h30v30H1z" fill="#262626" stroke="#10a2d8" strokeWidth="2" />
        <path d="M6 9h5v14H6zM21 9h5v14h-5z" fill="#fff" stroke="none" />
        <path d="M11 11.500h10M11 20.500h10" stroke="#fff" strokeWidth="2" />
        <path d="M8.500 10.500v12M23.500 10.500v12" stroke="#262626" strokeWidth="2" strokeDasharray="2 1.500" />
      </Icon>
    ),
  },
  {
    name: 'FastStone Capture',
    icon: (
      <Icon w={30} h={30}>
        <rect x="1" y="2" width="28" height="27" rx="4" fill="#f3f3f3" stroke="none" />
        <path d="M12 3C5 6 1 12 1 20l8 2z" fill="#1f9a38" stroke="none" />
        <path d="M12 3c-2 7-3 12-3 19l5-3z" fill="#fff" stroke="none" />
        <path d="M12 3c8 2 13 8 14 18l-13 6c3-8 3-16-1-24z" fill="#e2321c" stroke="none" />
        <path d="M12 3c6 4 9 11 9 20" stroke="#f58a6a" />
        <path d="m11 4 4-4" stroke="#4f9a2f" strokeWidth="2" />
      </Icon>
    ),
  },
  {
    name: '桌宠',
    icon: (
      <Icon w={32} h={32}>
        <rect width="32" height="32" rx="4" fill="#5bbde2" stroke="none" />
        <path d="M5 15c2-2 5 1 6 4 4-6 15-6 21-2v10c0 3-2 5-4 5H15c-4-4-3-8-5-10-3 0-6-4-5-7z" fill="#fff" stroke="none" />
        <path d="M26 14c-5-6-4-12 5-11" stroke="#fff" strokeWidth="3" />
        <path d="M16 19h3M25 19h3M20 22c1 1 2 1 3 0" stroke="#3b8fb5" />
        <path d="M6.500 6.500h5v5h-5zM8 9h2" stroke="#d5f0fa" />
      </Icon>
    ),
  },
  { name: 'QQ', icon: <Penguin size={32} /> },
  {
    name: 'Chrome',
    icon: (
      <Icon w={30} h={30}>
        <path d="M15 15 2 7.500A15 15 0 0 1 28 7.500z" fill="#df4b3b" stroke="none" />
        <path d="M15 15 2 7.500A15 15 0 0 0 15 30l6-11z" fill="#2a9f58" stroke="none" />
        <path d="M15 8h13.300A15 15 0 0 1 14.500 30L21 19z" fill="#fbc924" stroke="none" />
        <circle cx="15" cy="15" r="6" fill="#4a86ef" stroke="#fff" strokeWidth="1.500" />
      </Icon>
    ),
  },
  {
    name: '猎豹浏览器',
    icon: (
      <Icon w={32} h={32}>
        <circle cx="16" cy="16" r="16" fill="#e9761c" stroke="none" />
        <path d="M5 17c3-2 4-6 9-8l1-3 4 3c8 1 12 8 11 16-2 3-5 5-8 6 1-6-1-10-5-11-1 3-4 4-7 3l-3 2-2-1 2-3-2-1z" fill="#f6e6d6" stroke="none" />
        <path d="m11 14 4-1M7 19c3 1 6 0 7-2" stroke="#a34f12" />
      </Icon>
    ),
  },
  {
    name: '搜狗浏览器',
    icon: (
      <Icon w={30} h={30}>
        <circle cx="15" cy="15" r="14.500" fill="#3584df" stroke="#fff" />
        <path d="M23.500 6C15 2 7 6 9 12c2 5 13 3 12 9-1 5-9 5-15 2" stroke="#fff" strokeWidth="4.500" />
      </Icon>
    ),
  },
  {
    name: '记事本',
    state: 'open',
    icon: (
      <Icon w={32} h={30}>
        <path d="M26 5l5 23-6 1z" fill="#d5c58b" stroke="none" />
        <path d="M11 3h16l-1 25L1 24z" fill="#8ed0dc" stroke="#c4e9ef" />
        <path d="M11 4h8l-6 21-12-1z" fill="#c9edf2" stroke="none" />
        <path d="M11 2h17" stroke="#888" strokeWidth="3" strokeDasharray="1 1" />
      </Icon>
    ),
  },
  {
    name: 'Excel',
    state: 'active',
    icon: (
      <Icon w={32} h={28}>
        <path d="M9 0h12v7H9z" fill="#21a366" stroke="none" />
        <path d="M20 0h12v7H20z" fill="#33c481" stroke="none" />
        <path d="M9 7h11v7H9z" fill="#107c41" stroke="none" />
        <path d="M20 7h12v7H20z" fill="#21a366" stroke="none" />
        <path d="M9 14h11v7H9zM9 21h23v7H9z" fill="#185c37" stroke="none" />
        <path d="M20 14h12v7H20z" fill="#107c41" stroke="none" />
        <path d="M0 6h16v16H0z" fill="#10693a" stroke="none" />
        <path d="m5 10 6 8M11 10l-6 8" stroke="#fff" strokeWidth="2.200" />
      </Icon>
    ),
  },
];

function Taskbar() {
  return (
    <div className="flex h-10 shrink-0 items-center bg-[#80475a] pl-[15px] text-white">
      {TASKS.map((task) => (
        <button key={task.name} aria-label={task.name} className="flex h-10 w-[62px] shrink-0 items-center pl-[2px]">
          <span
            className={clsx(
              'flex h-[38px] w-[58px] shrink-0 items-center justify-center',
              task.state === 'open' && 'border border-[#b893a0] bg-[#96697a]',
              task.state === 'stack' && 'border border-[#b893a0] bg-[#96697a]',
              task.state === 'active' && 'border border-[#f3e8ec] bg-[#b08f9b]',
            )}
          >
            {task.icon}
          </span>
          {task.state === 'stack' && <span className="h-[38px] w-[3px] border border-l-0 border-[#b893a0] bg-[#96697a]" />}
        </button>
      ))}
      <div className="ml-auto flex items-center">
        <button aria-label="显示隐藏的图标" className="mr-[14px] rotate-180"><Caret color="#fff" /></button>
        <Penguin size={16} />
        <span className="ml-[8px]">
          <Icon w={15} h={15}>
            <path d="M1.500 1v14" stroke="#fff" strokeWidth="2" />
            <path d="M3 2h4l1 1h4v7H3z" fill="#fff" stroke="none" />
            <circle cx="10.500" cy="10" r="4.500" fill="#d8332c" stroke="none" />
            <path d="m8.500 8 4 4M12.500 8l-4 4" stroke="#fff" />
          </Icon>
        </span>
        <span className="ml-[9px]">
          <Icon w={15} h={16}>
            <path d="M7.500 3.500h6v11h-6z" stroke="#fff" strokeWidth="1.400" />
            <path d="M9 1.500h3M1.500 1v3M4.500 1v3M3 7v8" stroke="#fff" strokeWidth="1.400" />
            <path d="M0 4h6v2L4 8H2L0 6z" fill="#fff" stroke="none" />
          </Icon>
        </span>
        <span className="ml-[9px]">
          <Icon w={15} h={14}>
            <path d="M0 4.500h3L7 1v12L3 9.500H0z" fill="#fff" stroke="none" />
            <path d="M9 4.500c1.500 1.500 1.500 3.500 0 5M11 2.500c3 3 3 6 0 9M13 1c3 4 3 8 0 12" stroke="#fff" />
          </Icon>
        </span>
        <span className="ml-[9px]">
          <Icon w={15} h={12}>
            <path d="M1 9v3M4 8v4M7 5.500V12M10 3v9M13 0v12" stroke="#fff" strokeWidth="2" />
          </Icon>
        </span>
        <span className="ml-[13px] text-[13px]">中</span>
        <span className="ml-[14px] flex h-[15px] w-4 -rotate-6 items-center justify-center rounded-[2px] bg-[#f0531c] text-[14px] font-bold leading-none">S</span>
        <time className="ml-[10px] mr-[14px] w-[76px] text-center text-[12px] leading-4">10:55<br />2020/8/12</time>
      </div>
    </div>
  );
}

/* ---------- things drawn over the window ---------- */

function Arrows() {
  return (
    <>
      <svg width="100" height="274" viewBox="0 0 100 274" className="pointer-events-none absolute left-[134px] top-[56px] drop-shadow-[3px_3px_2px_rgba(0,0,0,0.5)]" aria-hidden="true">
        <path d="M13 6 31 35l-6 2 59 227-5 1L20 38l-7 3z" fill="#f30000" />
      </svg>
      <svg width="350" height="34" viewBox="0 0 350 34" className="pointer-events-none absolute left-[630px] top-[430px] drop-shadow-[3px_3px_2px_rgba(0,0,0,0.5)]" aria-hidden="true">
        <path d="M6 18 41 8l-3 8 302-8v4L38 20l4 7z" fill="#f30000" />
      </svg>
    </>
  );
}

function Watermark() {
  return (
    <div className="pointer-events-none absolute bottom-0 right-0 h-[158px] w-[366px]">
      <svg width="366" height="158" viewBox="0 0 366 158" fill="none" aria-hidden="true">
        <g opacity="0.75">
          <circle cx="36" cy="49" r="11" fill="#fff" stroke="#b5b5b5" strokeWidth="3" />
          <path d="M25 49h22c0 6-4 9-8 11v19l-4 4-3-4V60c-4-2-7-5-7-11z" fill="#b5b5b5" />
        </g>
        <text x="76" y="56" fontSize="20" fill="#a8a8a8">激活 Windows</text>
        <text x="81" y="76" fontSize="14" fill="#a8a8a8">转到“电脑设置”以激活 Windows。</text>
        <g fill="#fff" fillOpacity="0.6" stroke="#c9c9c9" strokeWidth="1.500">
          <ellipse cx="158" cy="25" rx="9" ry="12" />
          <ellipse cx="180" cy="26" rx="9" ry="12" />
          <ellipse cx="141" cy="41" rx="9" ry="11" />
          <ellipse cx="193" cy="47" rx="9" ry="11" />
          <path d="M164 46c9 0 13 7 19 15 8 8 18 27-3 28-10 0-16-1-22 0-24 2-22-18-14-27 7-7 10-16 20-16z" />
        </g>
        <g fill="#fff" fillOpacity="0.8" stroke="#c4c4c4" strokeWidth="1.200">
          <text x="48" y="88" fontSize="54" fontWeight="700" className="font-['Liberation_Sans',sans-serif]">Bai</text>
          <text x="141" y="84" fontSize="38" fontWeight="700" className="font-['Liberation_Sans',sans-serif]">du</text>
          <text x="206" y="85" fontSize="41" fontWeight="700">经验</text>
        </g>
        <text x="49" y="119" fontSize="28" fill="#fff" fillOpacity="0.8" stroke="#bbb" strokeOpacity="0.5" strokeWidth="0.600">jingyan.baidu.com</text>
      </svg>
    </div>
  );
}

export default function App() {
  return (
    <div className="relative flex h-screen flex-col overflow-hidden bg-[#217346] font-['Noto_Sans','Noto_Sans_CJK_SC',sans-serif]">
      <TitleBar />
      <MenuTabs />
      <Ribbon />
      <FormulaBar />
      <WorkbookTabs />
      <SheetGrid />
      <SheetTabs />
      <StatusBar />
      <Taskbar />
      <Watermark />
      <Arrows />
    </div>
  );
}
